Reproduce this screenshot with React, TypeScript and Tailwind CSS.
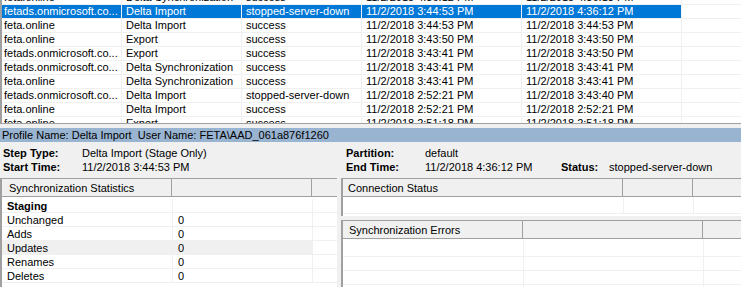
import React from "react";

const rows = [
  ["feta.online", "Delta Synchronization", "success", "11/2/2018 4:36:12 PM", "11/2/2018 4:36:13 PM"],
  ["fetads.onmicrosoft.co...", "Delta Import", "stopped-server-down", "11/2/2018 3:44:53 PM", "11/2/2018 4:36:12 PM"],
  ["feta.online", "Delta Import", "success", "11/2/2018 3:44:53 PM", "11/2/2018 3:44:53 PM"],
  ["feta.online", "Export", "success", "11/2/2018 3:43:50 PM", "11/2/2018 3:43:50 PM"],
  ["fetads.onmicrosoft.co...", "Export", "success", "11/2/2018 3:43:41 PM", "11/2/2018 3:43:50 PM"],
  ["fetads.onmicrosoft.co...", "Delta Synchronization", "success", "11/2/2018 3:43:41 PM", "11/2/2018 3:43:41 PM"],
  ["feta.online", "Delta Synchronization", "success", "11/2/2018 3:43:41 PM", "11/2/2018 3:43:41 PM"],
  ["fetads.onmicrosoft.co...", "Delta Import", "stopped-server-down", "11/2/2018 2:52:21 PM", "11/2/2018 3:43:40 PM"],
  ["feta.online", "Delta Import", "success", "11/2/2018 2:52:21 PM", "11/2/2018 2:52:21 PM"],
  ["feta.online", "Export", "success", "11/2/2018 2:51:18 PM", "11/2/2018 2:51:18 PM"],
];

const widths = ["w-[120px] pl-[2px]", "w-[120px] pl-[4px]", "w-[120px] pl-[4px]", "w-[160px] pl-[4px]", "w-[160px] pl-[4px]"];

const stats: [string, string, boolean?][] = [
  ["Unchanged", "0"],
  ["Adds", "0"],
  ["Updates", "0", true],
  ["Renames", "0"],
  ["Deletes", "0"],
];

export default function App() {
  return (
    <div className="w-[741px] h-[287px] overflow-hidden bg-[#f0f0f0] font-['Liberation_Sans',Arial,sans-serif] text-[11px] text-black">
      {/* Top run history list */}
      <div className="h-[123px] overflow-hidden bg-white border-l-2 border-[#a0a0a0]">
        <div className="-mt-[9px]">
          {rows.map((r, i) => {
            const sel = i === 1;
            return (
              <div key={i} className="flex h-[14px] border-b border-[#f0f0f0]">
                {r.map((c, j) => (
                  <div
                    key={j}
                    className={`${widths[j]} shrink-0 h-full border-r border-[#f0f0f0] leading-[13px] whitespace-nowrap overflow-hidden ${sel ? "bg-[#0078d7] text-white" : ""}`}
                  >
                    {c}
                  </div>
                ))}
                <div className="flex-1" />
              </div>
            );
          })}
        </div>
      </div>
      <div className="h-px bg-[#a0a0a0]" />
      <div className="h-[4px]" />
      {/* Profile band */}
      <div className="h-[14px] bg-[#99b4d1] pl-[2px] leading-[14px] whitespace-pre">
        {"Profile Name: Delta Import  User Name: FETA\\AAD_061a876f1260"}
      </div>
      {/* Details */}
      <div className="pt-[4px] pb-[4px] pl-[3px]">
        <div className="flex h-[14px] leading-[14px]">
          <div className="w-[79px] font-bold">Step Type:</div>
          <div className="w-[264px]">Delta Import (Stage Only)</div>
          <div className="w-[79px] font-bold">Partition:</div>
          <div>default</div>
        </div>
        <div className="flex h-[14px] leading-[14px]">
          <div className="w-[79px] font-bold">Start Time:</div>
          <div className="w-[264px]">11/2/2018 3:44:53 PM</div>
          <div className="w-[79px] font-bold">End Time:</div>
          <div className="w-[136px]">11/2/2018 4:36:12 PM</div>
          <div className="w-[48px] font-bold">Status:</div>
          <div>stopped-server-down</div>
        </div>
      </div>
      {/* Bottom panels */}
      <div className="flex h-[109px] gap-[4px]">
        {/* Sync statistics */}
        <div className="w-[337px] shrink-0 bg-white border-l-2 border-t border-[#a0a0a0] overflow-hidden">
          <div className="flex h-[18px] bg-[#f0f0f0] border-b border-[#a0a0a0] pt-[2px] leading-[15px]">
            <div className="w-[170px] pl-[7px] border-r border-[#a0a0a0] -mt-[2px] pt-[2px]">Synchronization Statistics</div>
            <div className="w-[140px] border-r border-[#a0a0a0] -mt-[2px]" />
            <div className="flex-1" />
          </div>
          <div className="pt-[2px]">
            <div className="flex h-[14px] border-b border-[#f0f0f0]">
              <div className="w-[171px] pl-[5px] font-bold leading-[14px] border-r border-[#f0f0f0]">Staging</div>
              <div className="w-[140px] border-r border-[#f0f0f0]" />
            </div>
            {stats.map(([k, v, hl]) => (
              <div key={k} className="flex h-[14px] border-b border-[#f0f0f0]">
                <div className={`w-[171px] pl-[5px] leading-[14px] border-r border-[#f0f0f0] ${hl ? "bg-[#f0f0f0]" : ""}`}>{k}</div>
                <div className={`w-[140px] pl-[5px] leading-[14px] border-r border-[#f0f0f0] ${hl ? "bg-[#f0f0f0]" : ""}`}>{v}</div>
              </div>
            ))}
          </div>
        </div>
        {/* Right panels */}
        <div className="flex-1 flex flex-col gap-[4px]">
          <div className="h-[38px] shrink-0 bg-white border-l-2 border-t border-[#a0a0a0] overflow-hidden">
            <div className="flex h-[18px] bg-[#f0f0f0] border-b border-[#a0a0a0] leading-[15px]">
              <div className="w-[280px] pl-[5px] pt-[2px] border-r border-[#a0a0a0]">Connection Status</div>
              <div className="w-[70px] border-r border-[#a0a0a0]" />
              <div className="flex-1" />
            </div>
            <div className="flex h-[17px] border-b border-[#f0f0f0]">
              <div className="w-[281px] border-r border-[#f0f0f0]" />
              <div className="w-[70px] border-r border-[#f0f0f0]" />
            </div>
          </div>
          <div className="flex-1 bg-white border-l-2 border-t border-[#a0a0a0] overflow-hidden">
            <div className="flex h-[18px] bg-[#f0f0f0] border-b border-[#a0a0a0] leading-[15px]">
              <div className="w-[180px] pl-[6px] pt-[2px] border-r border-[#a0a0a0]">Synchronization Errors</div>
              <div className="w-[180px] border-r border-[#a0a0a0]" />
              <div className="flex-1" />
            </div>
            {[0, 1, 2, 3].map((i) => (
              <div key={i} className={`flex ${i === 0 ? "h-[18px]" : "h-[14px]"} border-b border-[#f0f0f0]`}>
                <div className="w-[181px] border-r border-[#f0f0f0]" />
                <div className="w-[180px] border-r border-[#f0f0f0]" />
              </div>
            ))}
          </div>
        </div>
      </div>
    </div>
  );
}
